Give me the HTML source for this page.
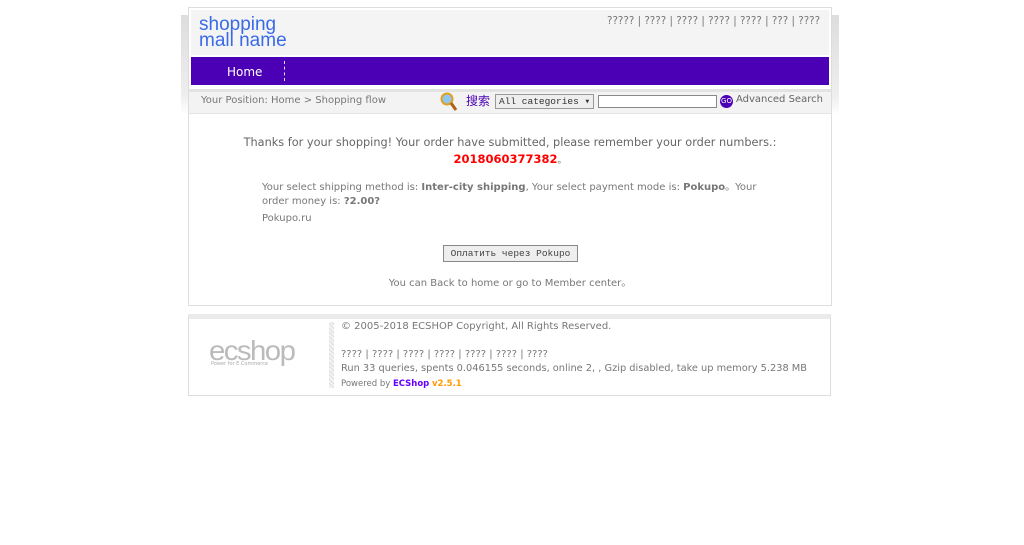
<!DOCTYPE html>
<html><head><meta charset="utf-8"><style>
*{margin:0;padding:0;box-sizing:border-box}
body{width:1024px;height:545px;background:#fff;font-family:"DejaVu Sans",Verdana,sans-serif;font-size:10px;color:#666;position:relative;overflow:hidden}
.abs{position:absolute;white-space:nowrap}
</style></head><body>
<div class="abs" style="left:181px;top:15px;width:8px;height:100px;background:linear-gradient(#ddd,#eee 80%,#fff)"></div>
<div class="abs" style="left:831px;top:15px;width:8px;height:100px;background:linear-gradient(#ddd,#eee 80%,#fff)"></div>
<div class="abs" style="left:188px;top:7px;width:644px;height:83px;border:1px solid #ddd;background:#fff"></div>
<div class="abs" style="left:191px;top:10px;width:638px;height:45px;background:#f4f4f4"></div>
<div class="abs" style="left:199px;top:17px;font-family:'Liberation Sans',sans-serif;font-size:19px;line-height:16px;color:#3a6ae8">shopping<br>mall name</div>
<div class="abs" style="left:607px;top:15px;font-size:10.3px;color:#777">????? | ???? | ???? | ???? | ???? | ??? | ????</div>
<div class="abs" style="left:191px;top:57px;width:638px;height:28px;background:#4b00b5"></div>
<div class="abs" style="left:227px;top:65px;font-size:12px;color:#fff">Home</div>
<div class="abs" style="left:284px;top:61px;height:20px;border-left:1px dashed #ddd"></div>
<div class="abs" style="left:188px;top:89px;width:644px;height:25px;background:#f3f3f3;border-top:3px solid #e3e3e3;border-left:1px solid #ddd;border-right:1px solid #ddd"></div>
<div class="abs" style="left:201px;top:95px;color:#777">Your Position: Home &gt; Shopping flow</div>
<svg class="abs" style="left:440px;top:92px" width="18" height="20"><circle cx="7" cy="7" r="5.5" fill="#8fc6ef" stroke="#e0a020" stroke-width="2"/><line x1="11" y1="11" x2="16" y2="18" stroke="#b06010" stroke-width="3"/></svg>
<div class="abs" style="left:466px;top:92px;font-family:'Noto Sans CJK SC',sans-serif;font-size:12px;color:#4b00b5">搜索</div>
<div class="abs" style="left:495px;top:94px;width:99px;height:15px;border:1px solid #999;background:#eee;font-family:'Liberation Mono',monospace;font-size:9.5px;line-height:13px;padding-left:3px;color:#333;overflow:hidden">All categories ▾</div>
<div class="abs" style="left:598px;top:95px;width:119px;height:13px;border:1px solid #888;background:#fff"></div>
<div class="abs" style="left:720px;top:95px;width:13px;height:13px;border-radius:50%;background:#4b00b5;color:#fff;font-size:7px;line-height:13px;text-align:center">GO</div>
<div class="abs" style="left:736px;top:94px;color:#666">Advanced Search</div>
<div class="abs" style="left:188px;top:113px;width:644px;height:193px;border:1px solid #ddd;border-top:1px solid #e4e4e4"></div>
<div class="abs" style="left:188px;top:135px;width:644px;text-align:center;font-size:11.3px;line-height:16px;color:#666">Thanks for your shopping! Your order have submitted, please remember your order numbers.:<br><b style="color:#f00;font-size:11.5px">2018060377382</b><span style="font-size:9px">。</span></div>
<div class="abs" style="left:262px;top:181px;line-height:14px;color:#777">Your select shipping method is: <b>Inter-city shipping</b>, Your select payment mode is: <b>Pokupo</b>。Your<br>order money is: <b>?2.00?</b></div>
<div class="abs" style="left:262px;top:213px;color:#777">Pokupo.ru</div>
<div class="abs" style="left:443px;top:245px;width:135px;height:17px;border:1px solid #888;background:#eee;font-family:'Liberation Mono',monospace;font-size:9.5px;line-height:15px;text-align:center;color:#444">Оплатить через Pokupo</div>
<div class="abs" style="left:188px;top:274px;width:644px;text-align:center;color:#777">You can Back to home or go to Member center。</div>
<div class="abs" style="left:188px;top:314px;width:643px;height:82px;border:1px solid #ddd;border-top:5px solid #ebebeb"></div>
<div class="abs" style="left:209px;top:338px;font-family:'Liberation Sans',sans-serif;font-size:28px;color:#bbb;letter-spacing:-1.5px;line-height:26px;transform:scaleX(1.05);transform-origin:left">ecshop</div>
<div class="abs" style="left:211px;top:361px;font-size:5px;color:#aaa">Power for E.Commerce</div>
<div class="abs" style="left:329px;top:322px;width:5px;height:66px;background:repeating-linear-gradient(45deg,#ddd 0 1px,#f4f4f4 1px 3px)"></div>
<div class="abs" style="left:341px;top:320px;color:#777;line-height:14px">© 2005-2018 ECSHOP Copyright, All Rights Reserved.</div>
<div class="abs" style="left:341px;top:349px;color:#777">???? | ???? | ???? | ???? | ???? | ???? | ????</div>
<div class="abs" style="left:341px;top:363px;color:#777;font-size:9.8px">Run 33 queries, spents 0.046155 seconds, online 2, , Gzip disabled, take up memory 5.238 MB</div>
<div class="abs" style="left:341px;top:379px;font-size:8.5px;color:#777">Powered by <b style="color:#6600ff">ECShop</b> <b style="color:#f90">v2.5.1</b></div>
</body></html>
